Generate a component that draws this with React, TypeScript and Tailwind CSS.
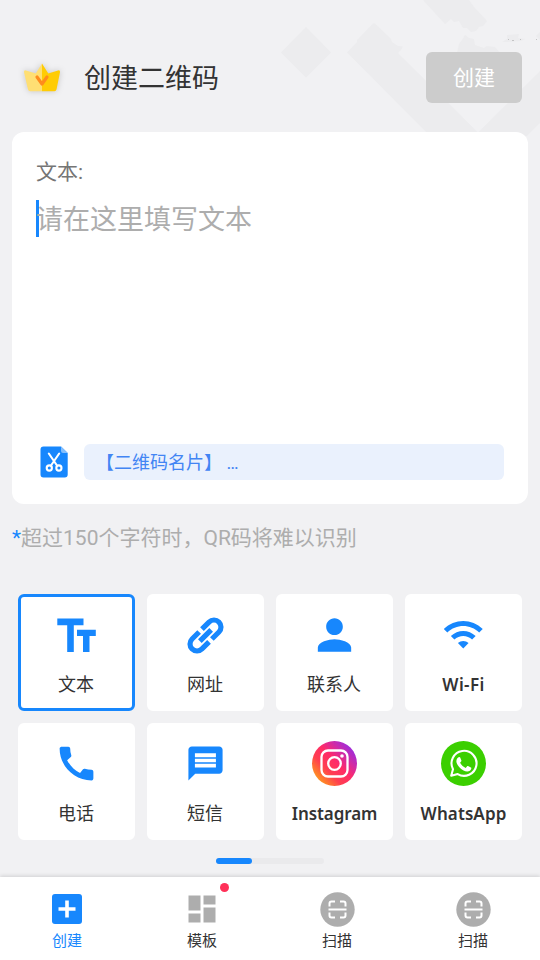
import type { ReactNode } from 'react';

const BLUE = '#1787fd';

function Backdrop() {
  return (
    <svg className="pointer-events-none absolute top-0 right-0" width="270" height="140" viewBox="270 0 270 140" fill="#ececee">
      <path d="M281 52.500 306 27l25 25.500-25 25z" />
      <path d="M347 52.500 357 42v-2l16-16.500h2L386 34l5 5 1 3 6 4 5 .5-2 3.500-3 3L478 132.500 540 71v52l-13 13H430z" />
      <path d="M423 0h46l5 7 13 14-4 5-4 1-3 4-5 1-4-4h-4l-4-7-5 1-3-3-6 5z" />
      <path d="M457 53l2-9 3-4 3-5 4 3 5 1 1 6 9 3 3-2 8 1 5 6z" />
      <path d="M502 42l5-3v-4l12-1-1 4 7 1-4 2-13 1zM536 36l4-4v8z" />
      <g fill="#c4c4c5">
        <path d="M508 39h1v1h-1zM512 40h2v1h-2zM520 39h1v1h-1zM536 39h1v1h-1z" />
      </g>
    </svg>
  );
}

function Crown() {
  return (
    <svg className="drop-shadow-[0_0_3px_rgba(0,0,0,0.18)]" width="38" height="30" viewBox="0 0 38 30">
      <path d="M19 .5 13 10Q12.500 10.600 12 10.300L3 7.400Q.5 7 1 9.300L5 26.500Q5.500 28.300 7 28.300H19z" fill="#ffdf73" />
      <path d="M19 .5 25 10Q25.500 10.600 26 10.300L35 7.400Q37.500 7 37 9.300L33.500 26.500Q33 28.300 31.500 28.300H19z" fill="#ffcc05" />
      <path d="M14 14 19 21l5-7" fill="none" stroke="#ff8c1c" strokeWidth="3.200" strokeLinejoin="round" strokeLinecap="round" />
    </svg>
  );
}

function ScissorsFile() {
  return (
    <svg width="28" height="32" viewBox="0 0 28 32">
      <path d="M3.500.5H21L27.700 7v21.500a3 3 0 0 1-3 3H3.500a3 3 0 0 1-3-3v-25a3 3 0 0 1 3-3z" fill={BLUE} />
      <path d="M21 .5 27.700 7H23a2 2 0 0 1-2-2z" fill="#84bffd" />
      <g stroke="#fff" fill="none" strokeWidth="2.100" strokeLinecap="round">
        <path d="M8.800 7.500 17 19.500M19.200 7.500 11 19.500" />
        <circle cx="9.300" cy="22" r="2.600" />
        <circle cx="18.900" cy="22" r="2.600" />
      </g>
    </svg>
  );
}

const textIcon = (
  <svg width="40" height="34" viewBox="0 0 40 34" fill={BLUE}>
    <path d="M1.300.500h26.200v6.700H17.800V34h-6.600V7.200H1.300zM21 11.700h18.800v6.300H33.500v16h-6.500V18h-6z" />
  </svg>
);
const linkIcon = (
  <svg width="40" height="40" viewBox="-20 -20 40 40" fill="none" stroke={BLUE} strokeWidth="5.200">
    <g transform="translate(.5 .5) rotate(-45)">
      <path d="M2 -7H12A7 7 0 0 1 12 7H2M-2 -7H-12A7 7 0 0 0 -12 7H-2M-8 0H8" />
    </g>
  </svg>
);
const personIcon = (
  <svg width="50" height="50" viewBox="-0.240 0 24 24" fill={BLUE}>
    <path d="M12 12c2.210 0 4-1.790 4-4s-1.790-4-4-4-4 1.790-4 4 1.790 4 4 4zm0 2c-2.670 0-8 1.340-8 4v2h16v-2c0-2.660-5.330-4-8-4z" />
  </svg>
);
const wifiIcon = (
  <svg width="42.500" height="42.500" viewBox="0 0 24 24" fill={BLUE}>
    <path d="M1 9l2 2c4.970-4.970 13.030-4.970 18 0l2-2C16.930 2.930 7.080 2.930 1 9zm8 8l3 3 3-3c-1.650-1.660-4.340-1.660-6 0zm-4-4l2 2c2.760-2.760 7.240-2.760 10 0l2-2C15.140 9.140 8.870 9.140 5 13z" />
  </svg>
);
const phoneIcon = (
  <svg width="45" height="45" viewBox="0 0 24 24" fill={BLUE}>
    <path d="M20.010 15.380c-1.230 0-2.420-.2-3.530-.56-.35-.12-.74-.03-1.010.24l-1.570 1.970c-2.830-1.350-5.480-3.900-6.890-6.830l1.950-1.660c.27-.28.35-.67.24-1.020-.37-1.110-.56-2.300-.56-3.530 0-.54-.45-.99-.99-.99H4.190C3.650 3 3 3.240 3 3.990 3 13.280 10.730 21 20.010 21c.71 0 .99-.63.99-1.180v-3.450c0-.54-.45-.99-.99-.99z" />
  </svg>
);
const messageIcon = (
  <svg width="41" height="41" viewBox="0 0 24 24" fill={BLUE}>
    <path d="M20 2H4c-1.100 0-2 .9-2 2v18l4-4h14c1.100 0 2-.9 2-2V4c0-1.100-.9-2-2-2zm-1.900 12.400H5.800v-2.200h12.300zm0-3.100H5.800V9.200h12.300zm0-3H5.800V6h12.300z" />
  </svg>
);
const instagramIcon = (
  <svg width="45" height="45" viewBox="0 0 45 45">
    <defs>
      <linearGradient id="ig" x1="0.120" y1="0.880" x2="0.900" y2="0.150">
        <stop offset="0" stopColor="#ff9a1c" />
        <stop offset="0.300" stopColor="#ff3f4f" />
        <stop offset="0.550" stopColor="#ff2b68" />
        <stop offset="0.750" stopColor="#d52aa0" />
        <stop offset="1" stopColor="#9a2cdf" />
      </linearGradient>
    </defs>
    <circle cx="22.500" cy="22.500" r="22.500" fill="url(#ig)" />
    <g fill="none" stroke="#fff" strokeWidth="2.300">
      <rect x="9.500" y="9.500" width="26" height="26" rx="6.500" />
      <circle cx="22.500" cy="22.500" r="6.300" />
    </g>
    <circle cx="30" cy="15" r="1.800" fill="#fff" />
  </svg>
);
const whatsappIcon = (
  <svg width="45" height="45" viewBox="0 0 45 45">
    <circle cx="22.500" cy="22.500" r="22.500" fill="#3bcf00" />
    <path d="M10.200 34.800 12 28.200a12.500 12.500 0 1 1 4.700 4.900z" fill="none" stroke="#fff" strokeWidth="2.100" strokeLinejoin="round" />
    <path d="M18.300 16c.5 0 .7.200.9.600l1.200 2.800c.2.500-.1 1-1.300 2.400 1.500 2.600 3.300 4.100 5.700 5.200 1.300-1.800 1.600-2.200 2.200-1.900l2.900 1.500c.4.200.5.500.4 1-.4 2-2.200 3.100-4.200 3-4.800-.5-10-5.500-10.700-9.900-.2-2.200.9-4.500 2.900-4.700z" fill="#fff" />
  </svg>
);

type Tile = { label: string; icon: ReactNode; latin?: string; selected?: boolean };

const tiles: Tile[] = [
  { label: '文本', icon: textIcon, selected: true },
  { label: '网址', icon: linkIcon },
  { label: '联系人', icon: personIcon },
  { label: 'Wi-Fi', icon: wifiIcon, latin: 'tracking-[0.4px]' },
  { label: '电话', icon: phoneIcon },
  { label: '短信', icon: messageIcon },
  { label: 'Instagram', icon: instagramIcon, latin: 'tracking-[-0.1px]' },
  { label: 'WhatsApp', icon: whatsappIcon, latin: 'tracking-[0.1px]' },
];

function TileCard({ tile }: { tile: Tile }) {
  return (
    <button
      className={`flex h-[117px] flex-col items-center rounded-md border-[3px] bg-white pt-[13px] ${
        tile.selected ? 'border-[#1787fd]' : 'border-white'
      } ${tile.latin ? '' : 'pr-px'}`}
    >
      <span className="flex h-[49px] items-center justify-center">{tile.icon}</span>
      <span
        className={`mt-[13px] leading-[26px] whitespace-nowrap text-[#333] ${
          tile.latin ? `font-['Noto_Sans'] text-[17px] font-semibold ${tile.latin}` : 'text-[18px]'
        }`}
      >
        {tile.label}
      </span>
    </button>
  );
}

const createIcon = (
  <svg width="30" height="30" viewBox="0 0 30 30">
    <rect width="30" height="30" rx="3" fill={BLUE} />
    <path d="M15 6.500v17M6.500 15h17" stroke="#fff" strokeWidth="3.600" />
  </svg>
);
const templateIcon = (
  <svg width="28" height="28" viewBox="0 0 28 28" fill="#adadad">
    <path d="M.5.500h12v15H.5zM15.500.500h12v9h-12zM.5 18.500h12v9H.5zM15.500 12.500h12v15h-12z" />
  </svg>
);
const scanIcon = (
  <svg width="35" height="35" viewBox="0 0 35 35">
    <circle cx="17.500" cy="17.500" r="17.200" fill="#adadad" />
    <path d="M9.500 14.500V11.500Q9.500 9.500 11.500 9.500H15M20 9.500h3.500q2 0 2 2v3M9.500 20.500v3q0 2 2 2H15M20 25.500h3.500q2 0 2-2v-3M8.500 17.500h18" fill="none" stroke="#fff" strokeWidth="2" />
  </svg>
);

type NavItemProps = { icon: ReactNode; label: string; active?: boolean; dot?: boolean; last?: boolean };

function NavItem({ icon, label, active, dot, last }: NavItemProps) {
  return (
    <button className={`relative flex w-[135px] flex-col items-center pt-[14px] ${last ? 'pl-px' : 'pr-px'}`}>
      <span className="flex h-[36px] items-center">{icon}</span>
      <span className={`mt-[3px] text-[15px] leading-[22px] ${active ? 'text-[#1787fd]' : 'text-[#333]'}`}>{label}</span>
      {dot && <span className="absolute top-[6px] left-[85px] size-[9px] rounded-full bg-[#ff3058]" />}
    </button>
  );
}

export default function App() {
  return (
    <div className="relative flex h-[960px] w-[540px] flex-col overflow-hidden bg-[#f1f1f3] font-[Roboto,'Noto_Sans_CJK_SC',sans-serif] text-[#333]">
      <Backdrop />
      <header className="relative mt-[52px] flex h-[51px] items-center pr-[18px] pl-[23px]">
        <Crown />
        <h1 className="ml-[23px] pt-[3px] text-[27px] leading-[40px]">创建二维码</h1>
        <button className="ml-auto h-[51px] w-24 rounded-md bg-[#ccc] pt-[2px] text-[21px] text-white">创建</button>
      </header>

      <section className="relative mx-3 mt-[29px] flex h-[372px] flex-col rounded-xl bg-white px-6 pt-[25px] pb-6">
        <p className="text-[21px] leading-[31px] text-[#757575]">文本:</p>
        <div className="relative mt-3 flex h-[37px] items-center pt-1 text-[27px] leading-[37px] text-[#adadad]">
          <span className="absolute top-0 left-0 h-[37px] w-[3px] bg-[#1787fd]" />
          <span className="relative">请在这里填写文本</span>
        </div>
        <div className="mt-auto flex h-9 items-center">
          <span className="ml-1 flex w-11">
            <ScissorsFile />
          </span>
          <span className="flex h-9 flex-1 items-center rounded-md bg-[#eaf1fd] pt-px pl-3 text-[18px] whitespace-pre text-[#4285f4]">
            【二维码名片】 …
          </span>
        </div>
      </section>

      <p className="mx-3 mt-[19px] text-[21px] leading-[31px] text-[#adadad]">
        <span className="text-[#1787fd]">*</span>超过150个字符时，QR码将难以识别
      </p>

      <main className="mt-10 grid grid-cols-4 gap-3 px-[18px]">
        {tiles.map((tile) => (
          <TileCard key={tile.label} tile={tile} />
        ))}
      </main>

      <div className="mx-auto mt-[18px] h-[6px] w-[108px] rounded-full bg-[#eaeaec]">
        <div className="h-full w-9 rounded-full bg-[#1787fd]" />
      </div>

      <nav className="mt-auto flex h-[83px] bg-white shadow-[0_-1px_4px_rgba(0,0,0,0.14)]">
        <NavItem icon={createIcon} label="创建" active />
        <NavItem icon={templateIcon} label="模板" dot />
        <NavItem icon={scanIcon} label="扫描" />
        <NavItem icon={scanIcon} label="扫描" last />
      </nav>
    </div>
  );
}
